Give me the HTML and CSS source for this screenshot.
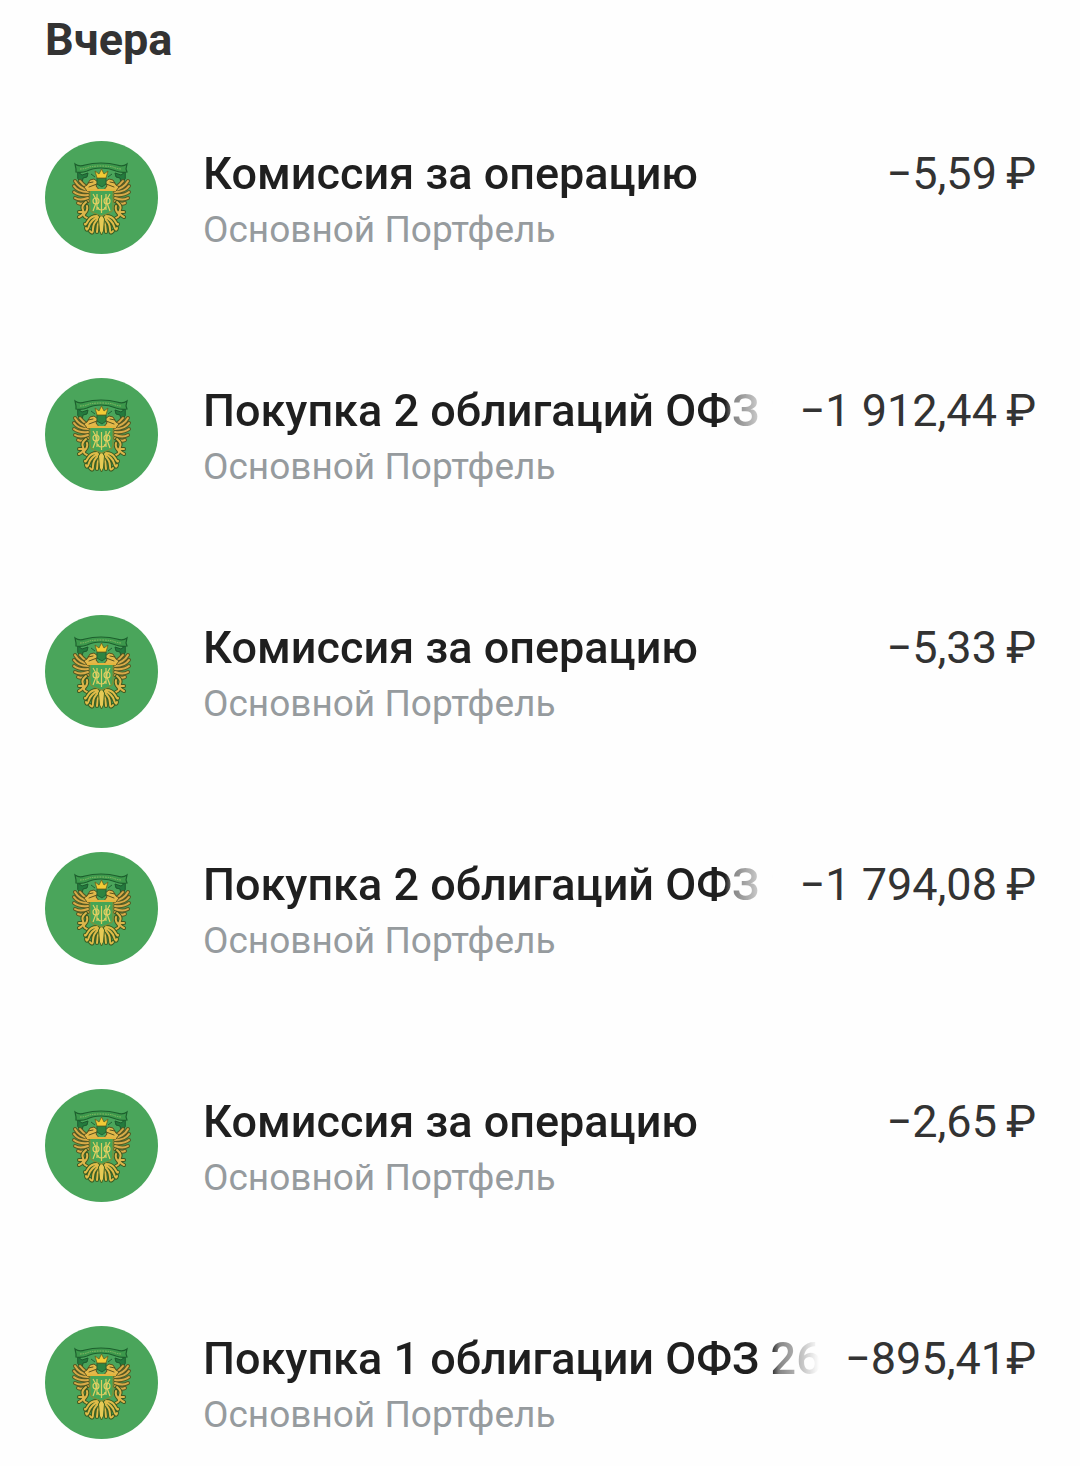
FILE: index.html
```html
<!DOCTYPE html>
<html lang="ru">
<head>
<meta charset="utf-8">
<meta name="viewport" content="width=device-width, initial-scale=1">
<title>История операций</title>
<link rel="stylesheet" href="styles.css">
</head>
<body>
<svg class="sprite" aria-hidden="true">
  <symbol id="emblem" viewBox="0 0 113 113">
    <!-- one half of the eagle, mirrored for the other side -->
    <g id="eagle-half" stroke-linejoin="round" stroke-linecap="round" fill="none">
      <path d="M33 31l4 3 6-2-1 4-4 1-1 5-4-4z" fill="#237a3d" stroke="#1d5a2e"/>
      <path d="M43 49Q34 47 30 40M43 51Q33 51 29 45M43 54Q34 55 29 51M43 57Q35 60 30 57M43 60Q37 64 33 62M43 47Q38 44 35 40" stroke="#565a24" stroke-width="4"/>
      <path d="M43 49Q34 47 30 40M43 51Q33 51 29 45M43 54Q34 55 29 51M43 57Q35 60 30 57M43 60Q37 64 33 62M43 47Q38 44 35 40" stroke="#d8ab48" stroke-width="2"/>
      <path d="M42 44l3-5 4-1 4 3-2 4 4 5H42l-3-4z" fill="#e3b94a" stroke="#58531f" stroke-width="1"/>
      <path d="M43 42l5-1M44 46l8-3" stroke="#58531f" stroke-width="1"/>
      <path d="M41 61Q36 65 38 69T34 76M42 65Q43 69 40 72T42 77M39 71L34 71" stroke="#405820" stroke-width="4"/>
      <path d="M41 61Q36 65 38 69T34 76M42 65Q43 69 40 72T42 77M39 71L34 71" stroke="#dcb54a" stroke-width="2"/>
      <path d="M52 75Q46 75 43 80T40 83M53 76Q46 79 44 85T41 87M54 77Q48 82 48 88T45 90M55 78Q52 84 52 91" stroke="#3b5f24" stroke-width="4"/>
      <path d="M52 75Q46 75 43 80T40 83M53 76Q46 79 44 85T41 87M54 77Q48 82 48 88T45 90M55 78Q52 84 52 91" stroke="#dfbb48" stroke-width="2"/>
    </g>
    <use href="#eagle-half" transform="translate(113 0) scale(-1 1)"/>
    <path d="M56.500 73l3 5-1 12-2 4-2-4-1-12z" fill="#e6ca55" stroke="#3f6322" stroke-width="1"/>
    <path d="M30 23q4 3 10 1 7-2 16-2t16 2q6 2 10-1l-1 5 1 3q-6 1-11-1-7-3-15-3t-14 3q-5 2-11 1l0-3z" fill="#3d994c" stroke="#1d602e" stroke-width="1.2"/>
    <path d="M35 28q5 0 9-2 5-1 12-1t12 1q4 2 9 2" fill="none" stroke="#8fba65" stroke-width="1" stroke-dasharray="1.5 1"/>
    <path d="M50 36l-4-3M63 36l4-3M52 37h9l0 6-4 3-5-3z" fill="#2e8441" stroke="#226335"/>
    <path d="M52 37l-2-7 4 3 2.500-5 2.500 5 4-3-2 7z" fill="#f2cb35" stroke="#68621f" stroke-width=".8"/>
    <path d="M45 49h23v18q0 4-4 5l-7.500 3-7.500-3q-4-1-4-5z" fill="#47a555" stroke="#8a8b30" stroke-width="1"/>
    <path d="M42 49h29" stroke="#e4b53e" stroke-width="2"/>
    <g fill="none" stroke="#dfcf62" stroke-width="1.200">
      <path d="M48 53q4 6 3 9l-3 8M65 53q-4 6-3 9l3 8M52 53v16M61 53v16M56.500 54v18M53 66q0 3 3.500 3 3.500 0 3.500-3"/>
      <ellipse cx="51" cy="60" rx="3" ry="3"/>
      <ellipse cx="62" cy="60" rx="3" ry="3"/>
    </g>
  </symbol>
</svg>

<main class="history">
  <h1 class="history-date">Вчера</h1>
  <ul class="operations">
    <li class="operation">
      <svg class="avatar" aria-hidden="true"><use href="#emblem"/></svg>
      <div class="details">
        <div class="headline"><h2 class="title">Комиссия за операцию</h2><span class="amount">−5,59&#8201;₽</span></div>
        <p class="account">Основной Портфель</p>
      </div>
    </li>
    <li class="operation">
      <svg class="avatar" aria-hidden="true"><use href="#emblem"/></svg>
      <div class="details">
        <div class="headline"><h2 class="title">Покупка 2 облигаций ОФЗ 26</h2><span class="amount">−1&nbsp;912,44&#8201;₽</span></div>
        <p class="account">Основной Портфель</p>
      </div>
    </li>
    <li class="operation">
      <svg class="avatar" aria-hidden="true"><use href="#emblem"/></svg>
      <div class="details">
        <div class="headline"><h2 class="title">Комиссия за операцию</h2><span class="amount">−5,33&#8201;₽</span></div>
        <p class="account">Основной Портфель</p>
      </div>
    </li>
    <li class="operation">
      <svg class="avatar" aria-hidden="true"><use href="#emblem"/></svg>
      <div class="details">
        <div class="headline"><h2 class="title">Покупка 2 облигаций ОФЗ 26</h2><span class="amount">−1&nbsp;794,08&#8201;₽</span></div>
        <p class="account">Основной Портфель</p>
      </div>
    </li>
    <li class="operation">
      <svg class="avatar" aria-hidden="true"><use href="#emblem"/></svg>
      <div class="details">
        <div class="headline"><h2 class="title">Комиссия за операцию</h2><span class="amount">−2,65&#8201;₽</span></div>
        <p class="account">Основной Портфель</p>
      </div>
    </li>
    <li class="operation">
      <svg class="avatar" aria-hidden="true"><use href="#emblem"/></svg>
      <div class="details">
        <div class="headline"><h2 class="title">Покупка 1 облигации ОФЗ 26</h2><span class="amount">−895,41₽</span></div>
        <p class="account">Основной Портфель</p>
      </div>
    </li>
  </ul>
</main>
</body>
</html>
```
FILE: styles.css
```css
* {
  box-sizing: border-box;
}

body {
  margin: 0;
  background: #fefefe;
  color: #333;
  font-family: Roboto, "Liberation Sans", sans-serif;
  font-size: 45px;
  line-height: 56px;
}

h1,
h2,
p,
ul {
  margin: 0;
  padding: 0;
}

.sprite {
  display: none;
}

.history {
  padding: 12px 44px 27px 45px;
}

.history-date {
  font-size: 45px;
  font-weight: 700;
}

.operations {
  display: flex;
  flex-direction: column;
  gap: 120px;
  margin-top: 73px;
  list-style: none;
}

.operation {
  display: flex;
  align-items: flex-start;
  gap: 45px;
}

.avatar {
  flex: none;
  width: 113px;
  height: 113px;
  border-radius: 50%;
  background: #4aa55b;
}

.details {
  flex: 1;
  min-width: 0;
  padding-top: 5px;
}

.headline {
  display: flex;
  gap: 26px;
}

.title {
  flex: 1;
  min-width: 0;
  overflow: hidden;
  color: #1f1f1f;
  font-size: 45px;
  font-weight: 500;
  white-space: nowrap;
  mask-image: linear-gradient(to left, transparent, rgb(0 0 0 / 30%) 20px, rgb(0 0 0 / 55%) 40px, #000 48px);
}

.amount {
  flex: none;
  white-space: nowrap;
}

.account {
  color: #969b9e;
  font-size: 37px;
}
```
